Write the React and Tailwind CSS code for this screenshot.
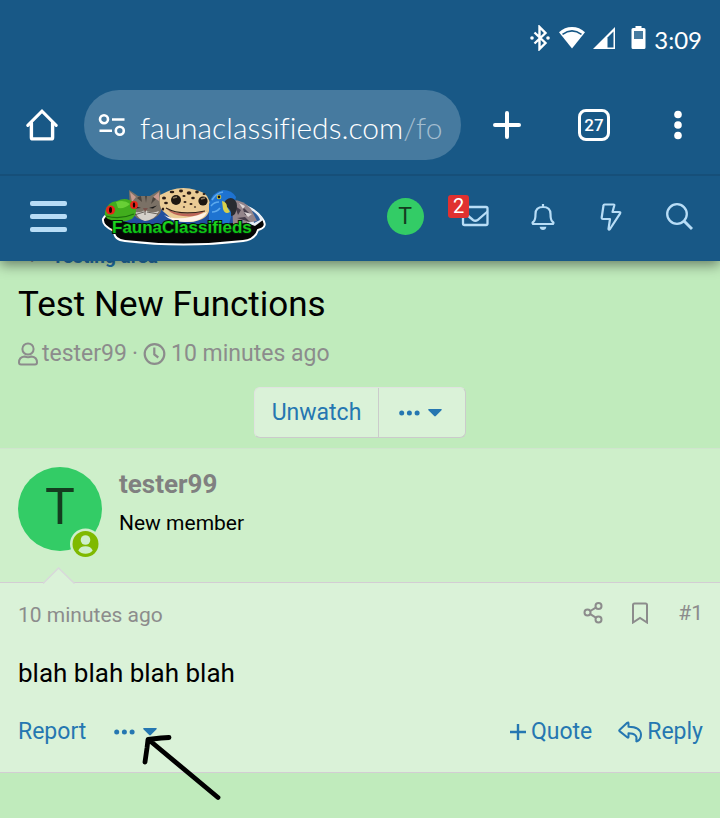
import React from "react";

const HomeIcon = () => (
  <svg width="32" height="32" viewBox="0 0 32 32" fill="none" stroke="#fff" strokeWidth="3.4" strokeLinecap="round">
    <path d="M1.8 16.4 16 2.2l14.2 14.2" strokeWidth="3" />
    <path d="M5.4 14v14.4q0 1.5 1.5 1.5h18.2q1.5 0 1.5-1.5V14" />
  </svg>
);

const SiteInfoIcon = () => (
  <svg width="28" height="24" viewBox="0 0 28 24" fill="none" stroke="#fff" strokeWidth="2.6">
    <circle cx="6" cy="6.2" r="4" />
    <path d="M14 6.5h12.5M1.5 17.8H14" />
    <circle cx="21.8" cy="17.8" r="4" />
  </svg>
);

const CaretDown = () => (
  <svg width="14" height="8" viewBox="0 0 14 8" fill="currentColor">
    <path d="M.8 0h12.4q1 .4.3 1.2L7.8 7q-.8.8-1.6 0L.4 1.2Q-.2.4.8 0z" />
  </svg>
);

const MoreDots = () => (
  <svg width="21" height="6" viewBox="0 0 21 6" fill="currentColor">
    <circle cx="2.7" cy="3" r="2.5" />
    <circle cx="10.4" cy="3" r="2.5" />
    <circle cx="18.1" cy="3" r="2.5" />
  </svg>
);

const Logo = () => (
  <svg width="166" height="58" viewBox="0 0 166 58" role="img" aria-label="FaunaClassifieds">
    <defs>
      <linearGradient id="leaf" x1="0" y1="0" x2="0" y2="1">
        <stop offset="0" stopColor="#24e024" />
        <stop offset="1" stopColor="#05b80f" />
      </linearGradient>
    </defs>
    {/* plate */}
    <path
      d="M2 31Q6 23 24 20L134 14Q154 20 161 30 168 39 157 42 154 52 142 53 82 60 24 53 13 52 13 43 1 38 2 31z"
      fill="#050505"
      stroke="#fff"
      strokeWidth="2"
    />
    <path d="M6 26q14 9 32 10h80q30-1 40-7-6-8-26-11H30z" fill="#214f9e" />
    <path d="M146 18q13 6 16 14l-8 6-8-3z" fill="#e8eef4" />
    <path d="M150 22q8 5 9 10l-6 3z" fill="#2d5d9c" />
    {/* cat */}
    <path d="M28 2q5 3 9 6h12q5-3 10-6l2 18q-2 10-15 13-12-1-17-11z" fill="#7b7166" />
    <path d="m29 4 6 5-4 5zM58 4l-6 5 6 4z" fill="#c89a8e" />
    <path d="M36 10q2-2 4-2l1 6zm8-2h2l-1 7zm8 1 3 2-5 5z" fill="#4b443e" />
    <path d="m33 18 7 2-6 .5zm15 2 8-2.5-4 3z" fill="#171717" />
    <path d="M34 24q6 1 10-2 7 4 14 1-3 8-14 10-7-2-10-9z" fill="#d5d0ca" />
    <path d="m42 20 5 0-3 4z" fill="#79534c" />
    <path d="m33 27 10-3M57 26l-11-2M44 23v4" stroke="#49433e" strokeWidth=".8" />
    {/* frog */}
    <path d="M4 24q2-10 12-11 10-5 18 3 3 10-3 15-12 5-24 0-4-3-3-7z" fill="#41ad1d" />
    <path d="M15 14q8-3 14 2-5 5-12 4z" fill="#68cf36" />
    <path d="M5 28q14 4 28-2" fill="none" stroke="#1c6e0d" strokeWidth="1.2" />
    <circle cx="9.5" cy="22" r="4.6" fill="#e7251a" />
    <circle cx="33" cy="17" r="3.9" fill="#e7251a" />
    <ellipse cx="9.5" cy="22" rx="1.5" ry="3" fill="#160000" />
    <ellipse cx="33" cy="17" rx="1.2" ry="2.7" fill="#160000" />
    {/* gecko */}
    <path d="M59 7q8-4 11-5 12-4 25 0 8 2 11 6 5 8 2 15-2 9-18 11-17 1-26-9-7-5-5-18z" fill="#eacb95" />
    <path d="M63 27q15 8 43-3-4 10-22 10-14 0-21-7z" fill="#fff2e8" />
    <path d="M66 21q14 8 38 2-8 7-22 5-11-1-16-7z" fill="#bd6558" />
    <path d="M65 20q14 8 39 3" fill="none" stroke="#332018" strokeWidth="1.2" />
    <circle cx="75" cy="12" r="5" fill="#1d1712" />
    <circle cx="102" cy="13" r="4.6" fill="#1d1712" />
    <path d="m72 10 4-1M100 11l4-1" stroke="#8f7c60" strokeWidth="1.4" />
    <g fill="#2a1b14">
      <ellipse cx="63" cy="10" rx="2" ry="1.5" />
      <ellipse cx="71" cy="4" rx="2.3" ry="1.3" />
      <ellipse cx="80" cy="3" rx="2" ry="1.4" />
      <ellipse cx="88" cy="5" rx="2.3" ry="1.7" />
      <ellipse cx="96" cy="4" rx="1.8" ry="1.4" />
      <ellipse cx="83" cy="8" rx="1.6" ry="1.1" />
      <ellipse cx="92" cy="10" rx="1.8" ry="1.3" />
      <ellipse cx="65" cy="15" rx="1.9" ry="1.3" />
      <ellipse cx="84" cy="14" rx="1.5" ry="1" />
      <ellipse cx="90" cy="16" rx="1.5" ry="1" />
      <ellipse cx="83" cy="19" rx="1.1" ry=".8" />
      <ellipse cx="94" cy="19" rx="1.1" ry=".8" />
      <ellipse cx="62" cy="21" rx="1.2" ry="1.6" />
      <ellipse cx="103" cy="6" rx="1.4" ry="1" />
    </g>
    {/* parrots */}
    <path d="M131 12q12 0 19 9l6 12-24 4z" fill="#93848a" />
    <path d="m134 18 6 4-3 5zm7 0 8 8-5 1zm-5 12 8-1 5 5z" fill="#453c49" />
    <path d="m138 15 6 3-2 3zm5 9 8 2-4 3z" fill="#ded6d7" />
    <path d="M108 16q3-12 14-14 9 0 13 7l-2 9-5 18-20-2z" fill="#1e73d1" />
    <path d="M111 12q4-7 11-8M110 18q3-4 8-4m-7 10q5 0 8-4" stroke="#5ca9ed" fill="none" strokeWidth="1.6" />
    <path d="M125 12q5-4 9 0 4 5 0 14-2 2-4 2 1-7-6-10-2-3 1-6z" fill="#272b31" />
    <path d="M121 13q5 1 5 6l3 5q-5 3-7-3z" fill="#d8d04a" />
    <circle cx="118" cy="9" r="2.3" fill="#e3d43e" />
    <circle cx="118" cy="9" r="1.4" fill="#101010" />
    {/* word mark */}
    <text
      x="11"
      y="45"
      fontFamily="'Liberation Sans', sans-serif"
      fontWeight="700"
      fontSize="17"
      fill="url(#leaf)"
      stroke="#05180a"
      strokeWidth="2"
      paintOrder="stroke"
    >
      FaunaClassifieds
    </text>
  </svg>
);

const StatusBar = () => (
  <div className="flex h-[75px] items-center justify-end pt-px pr-[18px] text-white">
    <div className="flex items-center">
      <svg className="mr-2" width="22" height="26" viewBox="0 0 22 26" fill="none" stroke="#fff" strokeWidth="2.4">
        <path d="m5.5 7.5 11 10.5-6 6V2l6 6-11 10.5" />
        <circle cx="3" cy="13" r="1.8" fill="#fff" stroke="none" />
        <circle cx="19" cy="13" r="1.8" fill="#fff" stroke="none" />
      </svg>
      <svg className="mr-2" width="26" height="24" viewBox="0 0 26 24" fill="#fff">
        <path d="M13 1q7.5 0 13 5.2L13 22.6 0 6.2Q5.5 1 13 1z" />
        <path d="M3.5 8.3Q13 1.5 22.5 8.3" fill="none" stroke="#185886" strokeWidth="1.6" />
      </svg>
      <svg className="mr-4" width="22" height="24" viewBox="0 0 22 24" fill="#fff">
        <path d="M22 1v22H0z" />
        <path d="m20.500 5.500-6 6v10h6z" fill="#185886" />
      </svg>
      <svg className="mr-2" width="15" height="24" viewBox="0 0 15 24" fill="#fff">
        <path d="M4.5 0h6v2H13q1.5 0 1.5 1.5v18Q14.5 23 13 23H2Q.5 23 .5 21.5v-18Q.5 2 2 2h2.5z" />
        <path d="M3 5h9v8H3z" fill="#467a9f" />
      </svg>
    </div>
    <span className="pt-1 font-[Lato] text-[24px] leading-8">3:09</span>
  </div>
);

const BrowserBar = () => (
  <div className="flex h-[101px] items-start border-b-2 border-[#164f79] pt-[15px]">
    <button type="button" aria-label="Home" className="flex h-[70px] w-[84px] items-center justify-center">
      <HomeIcon />
    </button>
    <div className="flex h-[70px] min-w-0 flex-1 items-center rounded-full bg-[#467a9f] px-[14px]">
      <SiteInfoIcon />
      <div className="ml-[14px] min-w-0 flex-1 overflow-hidden pt-1 font-[Lato] text-[30px] leading-10 font-light whitespace-nowrap text-white [font-variant-ligatures:none]">
        faunaclassifieds.com<span className="text-[#a3bdcf]">/fo</span>
      </div>
    </div>
    <div className="flex h-[70px] w-[259px] items-center">
      <button type="button" aria-label="New tab" className="flex w-[92px] justify-center">
        <svg width="28" height="28" viewBox="0 0 28 28" stroke="#fff" strokeWidth="4" strokeLinecap="round">
          <path d="M14 2v24M2 14h24" />
        </svg>
      </button>
      <button type="button" aria-label="Tabs" className="ml-[25px] flex h-8 w-8 items-center justify-center rounded-lg border-3 border-white text-[17px] leading-5 font-medium text-white">
        27
      </button>
      <button type="button" aria-label="Menu" className="ml-auto flex w-[84px] justify-center">
        <svg width="8" height="30" viewBox="0 0 8 30" fill="#fff">
          <circle cx="4" cy="4.5" r="3.8" />
          <circle cx="4" cy="15" r="3.8" />
          <circle cx="4" cy="25.5" r="3.8" />
        </svg>
      </button>
    </div>
  </div>
);

const NavBar = () => (
  <div className="flex h-[85px] items-center pr-[7px] pb-1 pl-[30px] text-[#b8ddf6]">
    <button type="button" aria-label="Menu" className="flex w-[37px] flex-col gap-2">
      <span className="h-[5px] w-full rounded-xs bg-[#b8ddf6]"></span>
      <span className="h-[5px] w-full rounded-xs bg-[#b8ddf6]"></span>
      <span className="h-[5px] w-full rounded-xs bg-[#b8ddf6]"></span>
    </button>
    <a href="#" className="ml-[34px]">
      <Logo />
    </a>
    <div className="ml-auto flex items-center">
      <a href="#" className="flex w-[68px] justify-center pr-1">
        <span className="flex h-[37px] w-[37px] items-center justify-center rounded-full bg-[#33cc66] text-[23px] leading-6 text-[#143d1f]">T</span>
      </a>
      <a href="#" aria-label="Conversations" className="relative flex w-[68px] justify-center">
        <svg width="28" height="28" viewBox="0 0 28 28" fill="none" stroke="currentColor" strokeWidth="2.3">
          <rect x="2" y="4" width="24.5" height="18" rx="1.5" />
          <path d="m2 8.5 10 8.5q2.3 1.5 4.6 0L26.5 8.5" />
        </svg>
        <span className="absolute -top-2 left-[7px] flex h-[23px] w-[21px] items-center justify-center rounded-[3px] bg-[#e03030] text-[20px] leading-5 text-white">2</span>
      </a>
      <a href="#" aria-label="Alerts" className="flex w-[68px] justify-center">
        <svg width="24" height="28" viewBox="0 0 24 28" fill="none" stroke="currentColor" strokeWidth="2.2">
          <path d="M12 1v3M2 21q-1.2-1.2.5-2.2 2-1.8 2-7.8Q4.500 4 12 4t7.500 7q0 6 2 7.800 1.700 1 .5 2.200z" />
          <path d="M8.600 23.800h6.800Q14.800 27 12 27t-3.400-3.200z" fill="currentColor" stroke="none" />
        </svg>
      </a>
      <a href="#" aria-label="What's new" className="flex w-[68px] justify-center">
        <svg width="22" height="28" viewBox="0 0 22 28" fill="none" stroke="currentColor" strokeWidth="2.2" strokeLinejoin="round">
          <path d="M4.500 1.500h9q1 0 .8 1L12.500 9H19q2 0 1 1.600L10 26q-1 1.200-1.500 0L10 16H3q-1.500 0-1.300-1.500L3.500 2.500q.1-1 1-1z" />
        </svg>
      </a>
      <a href="#" aria-label="Search" className="flex w-[68px] justify-center">
        <svg width="28" height="28" viewBox="0 0 28 28" fill="none" stroke="currentColor" strokeWidth="2.3">
          <circle cx="12" cy="11" r="9.8" />
          <path d="m19 18 8 8" strokeWidth="3" />
        </svg>
      </a>
    </div>
  </div>
);

const Post = () => (
  <article className="relative border-y border-t-[#d0e4ce] border-b-[#d3cdd3] bg-[#daf2d8]">
    <div className="relative flex h-[134px] gap-[17px] border-b border-[#d3cdd3] bg-[#ceefca] px-[18px] pt-[18px]">
      <a href="#" className="relative h-[84px] w-[84px]">
        <span className="flex h-full w-full items-center justify-center rounded-full bg-[#33cc66] pb-1 text-[50px] leading-none text-[#143d1f]">T</span>
        <svg className="absolute right-0 -bottom-2" width="34" height="32" viewBox="0 0 34 32">
          <circle cx="17.5" cy="17" r="15.5" fill="#ceefca" />
          <circle cx="17.5" cy="17" r="13" fill="#7fb900" />
          <circle cx="17.5" cy="13" r="4.8" fill="#ceefca" />
          <path d="M10.3 23.5q1.7-4.3 7.2-4.3t7.2 4.3q-2.8 3.3-7.2 3.3t-7.2-3.3z" fill="#ceefca" />
        </svg>
      </a>
      <div>
        <a href="#" className="block text-[26px] leading-[34px] font-bold text-[#808080]">tester99</a>
        <p className="pt-[6px] text-[21px] leading-8">New member</p>
      </div>
      <svg className="absolute -bottom-[2px] left-[43px]" width="33" height="17" viewBox="0 0 33 17">
        <path d="M0 17 16 1l16 16z" fill="#daf2d8" />
        <path d="M0 16.5 15.5 1l16 15.5" fill="none" stroke="#d8d8da" strokeWidth="1.5" />
      </svg>
    </div>

    <div className="pr-[17px] pl-[18px]">
      <div className="flex h-16 items-center text-[21px] leading-8 text-[#8c8c8c]">
        <a href="#">10 minutes ago</a>
        <div className="ml-auto flex items-center pb-1">
          <a href="#" aria-label="Share" className="mr-7">
            <svg width="22" height="24" viewBox="0 0 22 24" fill="none" stroke="currentColor" strokeWidth="2">
              <circle cx="5.5" cy="11.5" r="3" />
              <circle cx="16.5" cy="5" r="3" />
              <circle cx="16.5" cy="18.5" r="3" />
              <path d="m8.300 10 5.500-3.300M8.300 13.200l5.500 3.500" />
            </svg>
          </a>
          <a href="#" aria-label="Add bookmark" className="mr-[30px]">
            <svg width="16" height="22" viewBox="0 0 16 22" fill="none" stroke="currentColor" strokeWidth="2">
              <path d="M1 20.5V3q0-1.5 1.5-1.5h11Q15 1.5 15 3v17.5L8 16z" />
            </svg>
          </a>
          <a href="#">#1</a>
        </div>
      </div>

      <p className="pt-2 text-[26px] leading-9">blah blah blah blah</p>

      <div className="mt-[25px] flex h-14 items-start text-[23px] leading-8 text-[#2577b1]">
        <a href="#">Report</a>
        <button type="button" aria-label="More options" className="ml-7 flex h-8 items-center gap-2">
          <MoreDots />
          <CaretDown />
        </button>
        <a href="#" className="ml-auto flex items-center gap-[5px]">
          <svg width="16" height="16" viewBox="0 0 16 16" stroke="currentColor" strokeWidth="2.4">
            <path d="M8 0v16M0 8h16" />
          </svg>
          Quote
        </a>
        <a href="#" className="ml-[26px] flex items-center gap-[5px]">
          <svg width="24" height="22" viewBox="0 0 24 22" fill="none" stroke="currentColor" strokeWidth="2" strokeLinejoin="round">
            <path d="m1.500 9 7.700-7.200q1.300-1 1.300.6v3.300q12 0 12.500 7.800 0 4.500-3.500 6.700-1.700.7-1.200-1 1.700-6.700-7.800-6.900v3.400q0 1.600-1.300.6L1.500 10.100q-.6-.6 0-1.100z" />
          </svg>
          Reply
        </a>
      </div>
    </div>

    {/* hand-drawn arrow over the post menu */}
    <svg className="pointer-events-none absolute -bottom-[29px] left-[140px]" width="84" height="70" viewBox="0 0 84 70" fill="none" stroke="#000" strokeWidth="4.8" strokeLinecap="round" strokeLinejoin="round">
      <path d="M78 66.500 9 9M29 6.500 21 7 8 8.500 7 17 5 31" />
    </svg>
  </article>
);

const App = () => {
  return (
    <div className="min-h-screen bg-[#c0ebbc] font-[Roboto] text-black">
      <header className="relative z-10 bg-[#185886] shadow-[0_4px_12px_rgba(0,0,0,0.45)]">
        <StatusBar />
        <BrowserBar />
        <NavBar />
      </header>

      <main>
        <div className="px-[18px]">
          <nav className="-mt-5 flex h-8 items-center gap-[18px] pl-[10px] text-[19px] leading-8 font-bold text-[#2577b1]">
            <span className="text-[#8c8c8c]">‹</span>
            <a href="#">Testing area</a>
          </nav>
          <h1 className="pt-[9px] text-[35px] leading-[46px]">Test New Functions</h1>
          <div className="mt-[10px] flex h-8 items-center text-[23px] leading-8 text-[#8c8c8c]">
            <svg width="20" height="24" viewBox="0 0 20 24" fill="none" stroke="currentColor" strokeWidth="2">
              <circle cx="10" cy="7" r="5.6" />
              <path d="M1 20.5q0-5.5 5.5-6 3.5 1.5 7 0 5.5.5 5.5 6 0 2-2 2H3q-2 0-2-2z" />
            </svg>
            <a href="#" className="ml-1">tester99</a>
            <span className="mx-[5px]">·</span>
            <svg width="23" height="22" viewBox="0 0 22 22" fill="none" stroke="currentColor" strokeWidth="2.2">
              <circle cx="11" cy="11" r="9.8" />
              <path d="M10.8 4.5v7l4 3" />
            </svg>
            <a href="#" className="ml-[5px]">10 minutes ago</a>
          </div>
          <div className="mt-[17px] mb-[10px] flex justify-center">
            <div className="flex h-[51px] rounded-md border border-[#e0e2e0] border-r-[#cbcbcb] border-b-[#cbcbcb] bg-[#daf2d8] text-[23px] leading-8 text-[#2577b1]">
              <button type="button" className="border-r border-[#cbcbcb] px-[17px]">Unwatch</button>
              <button type="button" aria-label="More options" className="flex w-[86px] items-center justify-center gap-2 pr-1">
                <MoreDots />
                <CaretDown />
              </button>
            </div>
          </div>
        </div>
        <Post />
      </main>
    </div>
  );
};

export default App;
